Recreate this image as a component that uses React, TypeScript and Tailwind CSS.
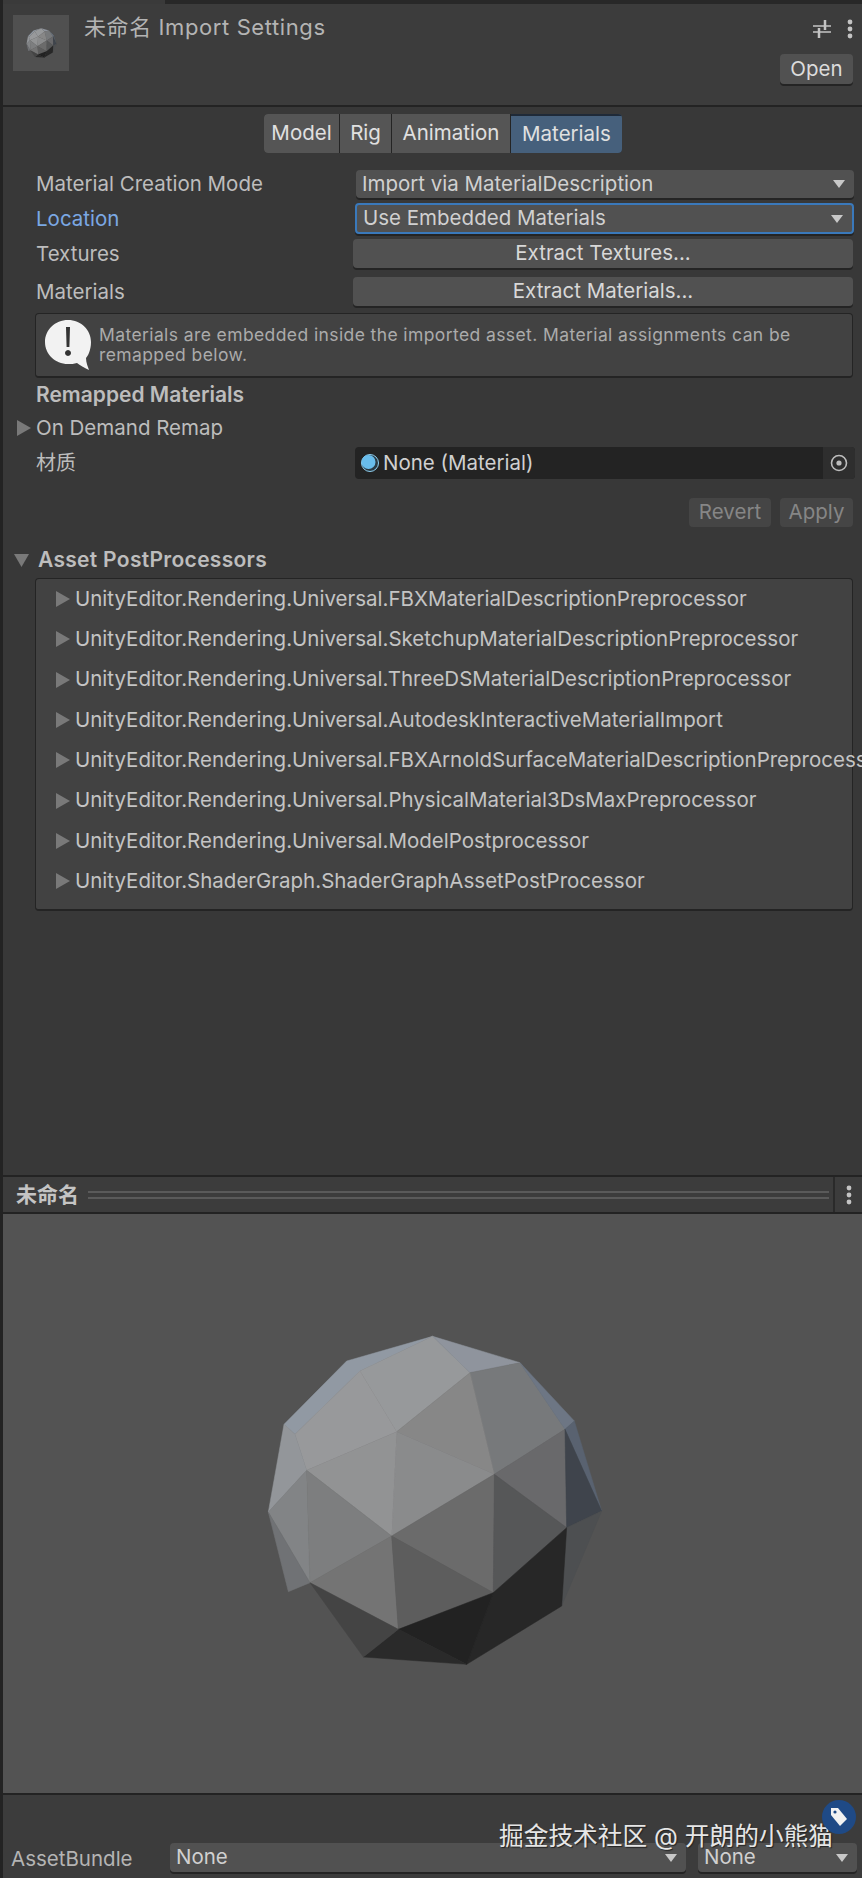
const font = { fontFamily: "Inter, 'Noto Sans CJK SC', sans-serif" };

const faces: [string, string][] = [
  ["320,150 578,76 360,180 165,370 132,340", "#9199a3"],
  ["578,76 690,185 470,362 360,180", "#97999b"],
  ["578,76 840,155 690,185", "#8f949d"],
  ["360,180 470,362 200,478 165,370", "#98999b"],
  ["132,340 165,370 200,478 85,603", "#93969a"],
  ["690,185 840,155 975,355 763,490", "#77797b"],
  ["840,155 1003,330 975,355", "#6d7684"],
  ["690,185 470,362 763,490", "#878787"],
  ["470,362 763,490 455,675", "#8a8b8c"],
  ["470,362 200,478 455,675", "#929394"],
  ["200,478 85,603 210,815", "#828486"],
  ["200,478 455,675 210,815", "#7d7e7f"],
  ["85,603 210,815 145,842", "#707275"],
  ["763,490 975,355 980,650", "#69696b"],
  ["763,490 455,675 760,845", "#6b6b6b"],
  ["763,490 980,650 760,845", "#565758"],
  ["455,675 210,815 475,955", "#747474"],
  ["455,675 760,845 475,955", "#5d5d5d"],
  ["975,355 1003,330 1085,600", "#596270"],
  ["975,355 1085,600 980,650", "#3f444c"],
  ["980,650 1085,600 965,885", "#4d4f51"],
  ["980,650 760,845 680,1060 965,885", "#272727"],
  ["760,845 475,955 680,1060", "#222222"],
  ["475,955 370,1038 680,1060", "#2a2a2a"],
  ["210,815 475,955 370,1038", "#444444"],
];

const Sphere = ({ size, className }: { size: number; className?: string }) => (
  <svg width={size} height={size} viewBox="0 0 1140 1140" className={className}>
    {faces.map(([points, fill]) => (
      <polygon key={points} points={points} fill={fill} stroke={fill} strokeWidth="1.5" />
    ))}
  </svg>
);

const Caret = () => (
  <svg width="12" height="8" viewBox="0 0 12 8" className="shrink-0">
    <polygon points="0,0 12,0 6,8" fill="#c8c8c8" />
  </svg>
);

const Arrow = () => (
  <svg width="14" height="16" viewBox="0 0 14 16" className="shrink-0">
    <polygon points="0,0 14,8 0,16" fill="#797979" />
  </svg>
);

const Dots = () => (
  <svg width="6" height="20" viewBox="0 0 6 20">
    <circle cx="3" cy="3" r="2.4" fill="#c4c4c4" />
    <circle cx="3" cy="10" r="2.4" fill="#c4c4c4" />
    <circle cx="3" cy="17" r="2.4" fill="#c4c4c4" />
  </svg>
);

const Dropdown = ({ text, className }: { text: string; className: string }) => (
  <div className={`flex items-center justify-between rounded-[4px] bg-[#515151] pl-[6px] pr-[9px] text-[20.5px] text-[#d0d0d0] shadow-[0_2px_0_#242424] ${className}`}>
    <span>{text}</span>
    <Caret />
  </div>
);

const Row = ({ label, labelClass, children }: { label: string; labelClass?: string; children: React.ReactNode }) => (
  <div className="flex items-center">
    <span className={`w-[317px] shrink-0 pl-[33px] text-[20.5px] leading-[26px] ${labelClass ?? "text-[#bdbdbd]"}`}>{label}</span>
    {children}
  </div>
);

const processors = [
  "UnityEditor.Rendering.Universal.FBXMaterialDescriptionPreprocessor",
  "UnityEditor.Rendering.Universal.SketchupMaterialDescriptionPreprocessor",
  "UnityEditor.Rendering.Universal.ThreeDSMaterialDescriptionPreprocessor",
  "UnityEditor.Rendering.Universal.AutodeskInteractiveMaterialImport",
  "UnityEditor.Rendering.Universal.FBXArnoldSurfaceMaterialDescriptionPreprocessor",
  "UnityEditor.Rendering.Universal.PhysicalMaterial3DsMaxPreprocessor",
  "UnityEditor.Rendering.Universal.ModelPostprocessor",
  "UnityEditor.ShaderGraph.ShaderGraphAssetPostProcessor",
];

const tabs = [
  { name: "Model", w: "w-[75px]" },
  { name: "Rig", w: "w-[51px]" },
  { name: "Animation", w: "w-[118px]" },
];

export default function App() {
  return (
    <div style={font} className="relative flex h-[1878px] w-[862px] flex-col overflow-hidden border-l-[3px] border-[#232323] bg-[#383838] whitespace-nowrap">
      {/* top strip */}
      <div className="h-[4px] shrink-0 bg-[#282828]">
        <div className="h-full w-[162px] bg-[#3a3a3a]" />
      </div>

      {/* header */}
      <div className="flex h-[103px] shrink-0 border-b-[2px] border-[#232323] bg-[#3c3c3c]">
        <div className="ml-[10px] mt-[11px] flex h-[56px] w-[56px] items-center justify-center bg-[#505050]">
          <Sphere size={34} className="blur-[0.5px]" />
        </div>
        <div className="ml-[15px] mt-[8px] text-[22px] leading-[30px] tracking-[0.6px] text-[#b4b4b4]">未命名 Import Settings</div>
        <div className="ml-auto mr-[9px] flex flex-col items-end">
          <div className="mt-[15px] flex items-center gap-[16px]">
            <svg width="18" height="18" viewBox="0 0 18 18">
              <path d="M0 6h18M0 12h18" stroke="#c4c4c4" strokeWidth="1.5" />
              <path d="M12 0v10M6 8v10" stroke="#c4c4c4" strokeWidth="2.5" />
            </svg>
            <Dots />
          </div>
          <div className="mt-[15px] flex h-[30px] w-[73px] items-center justify-center rounded-[4px] bg-[#515151] text-[20.5px] text-[#dcdcdc] shadow-[0_2px_0_#242424]">Open</div>
        </div>
      </div>

      {/* tabs */}
      <div className="ml-[261px] mt-[7px] flex h-[39px] w-[358px] shrink-0 gap-px overflow-hidden rounded-[4px] bg-[#242424] text-[20.5px] text-[#e0e0e0]">
        {tabs.map((t) => (
          <div key={t.name} className={`flex items-center justify-center bg-[#555555] ${t.w}`}>{t.name}</div>
        ))}
        <div className="flex flex-1 items-center justify-center border-t-[2px] border-[#1f2a38] bg-[#46607c]">Materials</div>
      </div>

      {/* material settings */}
      <div className="mt-[17px] flex shrink-0 flex-col">
        <Row label="Material Creation Mode">
          <Dropdown text="Import via MaterialDescription" className="ml-[36px] h-[28px] w-[498px]" />
        </Row>
        <div className="mt-[5px]">
          <Row label="Location" labelClass="text-[#7ba8e4]">
            <Dropdown text="Use Embedded Materials" className="ml-[35px] h-[31px] w-[499px] border-[2px] border-[#3a79bb]" />
          </Row>
        </div>
        <div className="mt-[5px]">
          <Row label="Textures">
            <div className="ml-[33px] flex h-[29px] w-[500px] items-center justify-center rounded-[4px] bg-[#515151] text-[20.5px] text-[#d8d8d8] shadow-[0_2px_0_#242424]">Extract Textures...</div>
          </Row>
        </div>
        <div className="mt-[9px]">
          <Row label="Materials">
            <div className="ml-[33px] flex h-[29px] w-[500px] items-center justify-center rounded-[4px] bg-[#515151] text-[20.5px] text-[#d8d8d8] shadow-[0_2px_0_#242424]">Extract Materials...</div>
          </Row>
        </div>
      </div>

      {/* help box */}
      <div className="ml-[32px] mt-[7px] flex h-[65px] w-[818px] shrink-0 items-center rounded-[4px] border border-[#242424] border-b-[2px] bg-[#424242] pl-[9px]">
        <svg width="46" height="50" viewBox="0 0 46 50" className="shrink-0">
          <path d="M23 0C36 0 46 10 46 22C46 30 43 36 41 38C41 43 43 47 44 50C39 48 35 45 32 43C29 44 26 44 23 44C10 44 0 34 0 22C0 10 10 0 23 0Z" fill="#f2f2f2" />
          <path d="M21 7h4l-.6 20h-2.8z M23 30a3 3 0 1 0 .01 0z" fill="#333333" />
        </svg>
        <div className="ml-[8px] whitespace-normal text-[17.5px] leading-[20.5px] tracking-[0.4px] text-[#ababab]">Materials are embedded inside the imported asset. Material assignments can be remapped below.</div>
      </div>

      <div className="ml-[33px] mt-[4px] flex h-[26px] shrink-0 items-center text-[21px] font-semibold text-[#bdbdbd]">Remapped Materials</div>

      <div className="mt-[7px] flex h-[26px] shrink-0 items-center pl-[14px] text-[20.5px] text-[#bdbdbd]">
        <Arrow />
        <span className="ml-[5px]">On Demand Remap</span>
      </div>

      <div className="mt-[6px] flex shrink-0 items-center">
        <span className="w-[352px] shrink-0 pl-[33px] text-[20px] leading-[26px] text-[#bdbdbd]">材质</span>
        <div className="flex h-[32px] w-[500px] items-center overflow-hidden rounded-[4px] bg-[#232323] text-[20.5px] text-[#d0d0d0]">
          <svg width="18" height="18" viewBox="0 0 18 18" className="ml-[6px] shrink-0">
            <circle cx="9" cy="9" r="8.5" fill="#2a3a44" stroke="#8fd0f0" strokeWidth="1" />
            <circle cx="7.5" cy="8" r="7" fill="#69bdec" />
          </svg>
          <span className="ml-[4px]">None (Material)</span>
          <div className="ml-auto flex h-full w-[32px] items-center justify-center bg-[#2e2e2e]">
            <svg width="18" height="18" viewBox="0 0 18 18">
              <circle cx="9" cy="9" r="7.5" fill="none" stroke="#bdbdbd" strokeWidth="1.6" />
              <circle cx="9" cy="9" r="2.6" fill="#bdbdbd" />
            </svg>
          </div>
        </div>
      </div>

      <div className="mr-[9px] mt-[19px] flex h-[29px] shrink-0 justify-end gap-[9px] text-[20.5px] text-[#868686]">
        <div className="flex w-[82px] items-center justify-center rounded-[4px] bg-[#454545]">Revert</div>
        <div className="flex w-[73px] items-center justify-center rounded-[4px] bg-[#454545]">Apply</div>
      </div>

      <div className="mt-[20px] flex h-[26px] shrink-0 items-center pl-[11px] text-[21px] font-semibold tracking-[0.3px] text-[#bdbdbd]">
        <svg width="15" height="13" viewBox="0 0 15 13" className="shrink-0">
          <polygon points="0,0 15,0 7.5,13" fill="#797979" />
        </svg>
        <span className="ml-[9px]">Asset PostProcessors</span>
      </div>

      {/* processors list */}
      <div className="ml-[32px] mt-[5px] h-[333px] w-[818px] shrink-0 rounded-[4px] border-t border-b-[2px] border-x border-[#242424] bg-[#424242] text-[20.5px] text-[#c4c4c4]">
        {processors.map((p) => (
          <div key={p} className="flex h-[40.3px] items-center pl-[20px]">
            <Arrow />
            <span className="ml-[5px]">{p}</span>
          </div>
        ))}
      </div>

      <div className="flex-1" />

      {/* preview title bar */}
      <div className="flex h-[39px] shrink-0 items-center border-y-[2px] border-[#232323] bg-[#3c3c3c]">
        <span className="ml-[13px] text-[21px] font-bold text-[#c4c4c4]">未命名</span>
        <div className="ml-[9px] flex h-[8px] flex-1 flex-col justify-between">
          <div className="h-[2px] bg-[#5a5a5a]" />
          <div className="h-[2px] bg-[#5a5a5a]" />
        </div>
        <div className="ml-[4px] flex h-full w-[29px] items-center justify-center border-l-[2px] border-[#2a2a2a]">
          <Dots />
        </div>
      </div>

      {/* preview */}
      <div className="flex h-[579px] shrink-0 items-center justify-center bg-[#535353] pb-[6px] pr-[6px]">
        <Sphere size={380} />
      </div>

      {/* asset bundle bar */}
      <div className="flex h-[85px] shrink-0 items-end border-t-[2px] border-[#232323] bg-[#3c3c3c] pb-[6px]">
        <span className="-mb-[2px] ml-[8px] flex h-[29px] w-[159px] items-center text-[20.5px] text-[#b4b4b4]">AssetBundle</span>
        <Dropdown text="None" className="h-[29px] w-[516px]" />
        <Dropdown text="None" className="ml-[12px] h-[29px] w-[159px]" />
      </div>

      {/* watermark */}
      <div className="absolute left-[496px] top-[1821px] text-[24.7px] leading-[30px] text-[#e6e6e6] [text-shadow:1px_1px_1px_#222222]">掘金技术社区 @ 开朗的小熊猫</div>
      <div className="absolute left-[819px] top-[1800px] flex h-[34px] w-[34px] items-center justify-center rounded-full bg-[#1f4a86]">
        <svg width="20" height="22" viewBox="0 0 20 22">
          <path d="M2 2h7l9 11-7 7-9-11z" fill="#f2f2f2" />
          <circle cx="6" cy="6" r="1.6" fill="#1f4a86" />
        </svg>
      </div>
    </div>
  );
}
